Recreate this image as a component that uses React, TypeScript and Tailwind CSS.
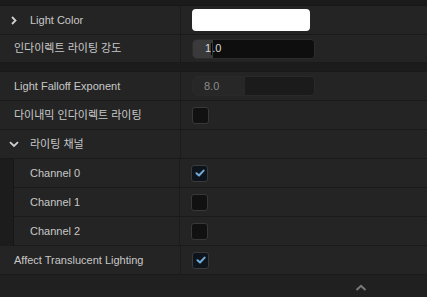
import type { ReactNode } from 'react';

const font = { fontFamily: '"Liberation Sans", "Noto Sans CJK KR", sans-serif' };

function Check({ on }: { on?: boolean }) {
  return (
    <div
      className={`w-[17px] h-[17px] rounded-[3px] border flex items-center justify-center ${
        on ? 'bg-[#0d141b] border-[#3a3a3a]' : 'bg-[#111111] border-[#383838]'
      }`}
    >
      {on && (
        <svg width="10" height="8" viewBox="0 0 10 8">
          <path d="M1.5 4.2 L4 6.5 L8.6 1.6" fill="none" stroke="#72acd6" strokeWidth="2" strokeLinecap="round" strokeLinejoin="round" />
        </svg>
      )}
    </div>
  );
}

function Row({
  label,
  children,
  indent = false,
  h = 'h-[29px]',
  pl = 'pl-[14px]',
}: {
  label: ReactNode;
  children?: ReactNode;
  indent?: boolean;
  h?: string;
  pl?: string;
}) {
  return (
    <div className={`flex ${h}`}>
      {indent && <div className="w-[14px] shrink-0 bg-[#1c1c1c] border-r border-[#161616]" />}
      <div className="flex flex-1 border-b border-[#1a1a1a] bg-[#242424]">
        <div
          className={`${indent ? 'w-[166px]' : 'w-[181px]'} shrink-0 flex items-center border-r border-[#1b1b1b] ${pl} text-[11px] text-[#c8c8c8]`}
        >
          {label}
        </div>
        <div className="flex-1 flex items-center pl-[11px]">{children}</div>
      </div>
    </div>
  );
}

export default function App() {
  return (
    <div className="w-[427px] h-[297px] bg-[#202020] overflow-hidden" style={font}>
      <div className="h-[6px] bg-[#1b1b1b] border-b border-[#171717]" />

      <Row
        pl="pl-[11px]"
        label={
          <>
            <svg width="6" height="9" viewBox="0 0 6 9" className="mr-[13px]">
              <path d="M1 1 L4.5 4.5 L1 8" fill="none" stroke="#d0d0d0" strokeWidth="1.8" />
            </svg>
            Light Color
          </>
        }
      >
        <div className="w-[118px] h-[22px] bg-white rounded-[4px]" />
      </Row>

      <Row h="h-[28px]" label="인다이렉트 라이팅 강도">
        <div className="relative w-[123px] h-[20px] rounded-[4px] bg-[#0e0e0e] border border-[#2c2c2c] overflow-hidden flex items-center">
          <div className="absolute left-0 top-0 bottom-0 w-[20px] bg-[#3a3a3a]" />
          <span className="relative pl-[12px] text-[11px] text-[#d6d6d6] flex items-center">
            1<span className="inline-block w-[1px] h-[12px] bg-black" />.0
          </span>
        </div>
      </Row>

      <div className="h-[9px] bg-[#1c1c1c] border-b border-[#191919]" />

      <Row label="Light Falloff Exponent">
        <div className="relative w-[123px] h-[20px] rounded-[4px] bg-[#1b1b1b] border border-[#292929] overflow-hidden flex items-center">
          <div className="absolute left-0 top-0 bottom-0 w-[52px] bg-[#272727]" />
          <span className="relative pl-[11px] text-[11px] text-[#8a8a8a]">8.0</span>
        </div>
      </Row>

      <Row label="다이내믹 인다이렉트 라이팅">
        <Check />
      </Row>

      <Row
        pl="pl-[9px]"
        label={
          <>
            <svg width="10" height="7" viewBox="0 0 10 7" className="mr-[11px]">
              <path d="M1 1.2 L5 5 L9 1.2" fill="none" stroke="#d0d0d0" strokeWidth="1.8" />
            </svg>
            라이팅 채널
          </>
        }
      />

      <Row indent pl="pl-[16px]" label="Channel 0">
        <Check on />
      </Row>
      <Row indent pl="pl-[16px]" label="Channel 1">
        <Check />
      </Row>
      <Row indent pl="pl-[16px]" label="Channel 2">
        <Check />
      </Row>

      <Row label="Affect Translucent Lighting">
        <Check on />
      </Row>

      <div className="flex justify-end pr-[60px] pt-[9px]">
        <svg width="12" height="7" viewBox="0 0 12 7">
          <path d="M1.5 6 L6 1.8 L10.5 6" fill="none" stroke="#7a7a7a" strokeWidth="2" />
        </svg>
      </div>
    </div>
  );
}
